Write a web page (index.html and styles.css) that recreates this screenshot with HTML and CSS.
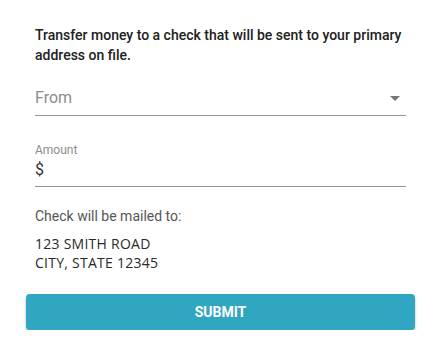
FILE: index.html
```html
<!DOCTYPE html>
<html>
<head>
<meta charset="utf-8">
<link rel="stylesheet" href="styles.css">
</head>
<body>
<div class="page">
  <p class="intro">Transfer money to a check that will be sent to your primary address on file.</p>
  <div class="select">
    <span class="select-value">From</span>
    <svg class="arrow" width="10" height="5" viewBox="0 0 10 5"><path d="M0 0 L10 0 L5 5 Z" fill="#757575"/></svg>
  </div>
  <div class="field">
    <div class="field-label">Amount</div>
    <div class="field-input">$</div>
  </div>
  <p class="mail-label">Check will be mailed to:</p>
  <p class="address">123 SMITH ROAD<br>CITY, STATE 12345</p>
  <button class="submit">SUBMIT</button>
</div>
</body>
</html>
```
FILE: styles.css
```css
html, body {
  margin: 0;
  padding: 0;
  background: #ffffff;
}
.page {
  padding: 25px 32px 0 35px;
  font-family: Roboto, "Liberation Sans", sans-serif;
  display: flex;
  flex-direction: column;
}
.intro {
  margin: 0;
  font-size: 14px;
  line-height: 20px;
  font-weight: 500;
  color: #212121;
}
.select {
  margin-top: 21px;
  display: flex;
  align-items: center;
  justify-content: space-between;
  padding-bottom: 5px;
  border-bottom: 1px solid #949494;
}
.select-value {
  font-size: 16px;
  line-height: 24px;
  color: #8c8c8c;
}
.arrow {
  margin-right: 6px;
  margin-top: 1px;
}
.field {
  margin-top: 26px;
  padding-bottom: 4px;
  border-bottom: 1px solid #949494;
}
.field-label {
  font-size: 12px;
  line-height: 16px;
  color: #8c8c8c;
}
.field-input {
  font-size: 16px;
  line-height: 24px;
  color: #333333;
}
.mail-label {
  margin: 19px 0 0;
  font-size: 14px;
  line-height: 20px;
  color: #555555;
}
.address {
  margin: 8px 0 0;
  font-family: "Open Sans", "Liberation Sans", sans-serif;
  font-size: 14px;
  line-height: 19px;
  letter-spacing: 0.25px;
  color: #2a2a2a;
}
.submit {
  margin: 22px -9px 0;
  height: 36px;
  border: none;
  border-radius: 4px;
  background: #30a6c1;
  color: #ffffff;
  font-family: Roboto, "Liberation Sans", sans-serif;
  font-weight: 700;
  font-size: 14px;
  box-shadow: 0 2px 2px rgba(0,0,0,0.2), 0 1px 4px rgba(0,0,0,0.12);
  padding: 0;
}
```
